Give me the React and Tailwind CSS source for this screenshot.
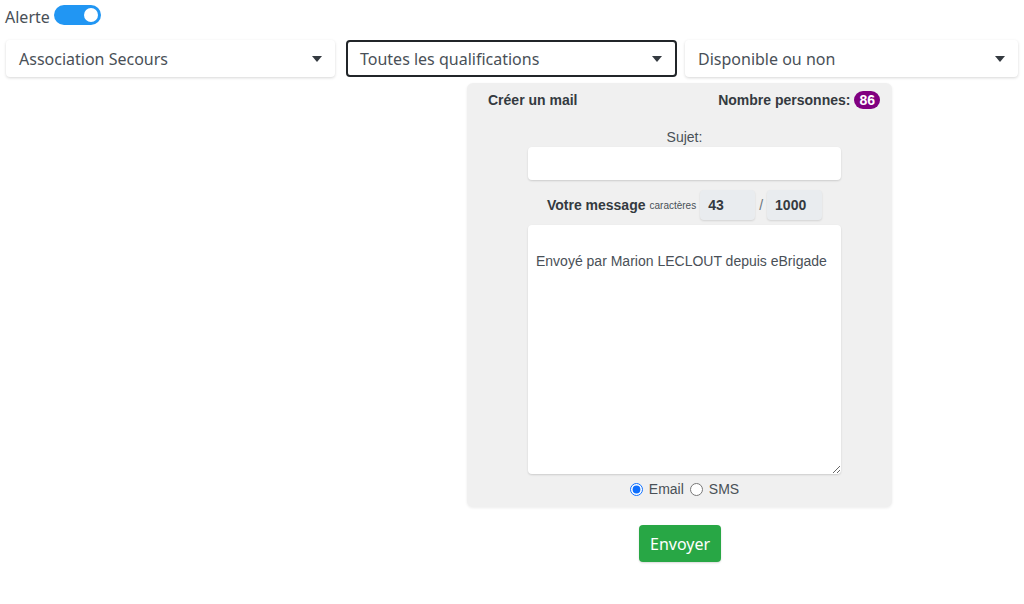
import { useState } from 'react';

const Caret = () => (
  <svg width="10" height="6" viewBox="0 0 10 6" className="flex-shrink-0">
    <path d="M0 0 L10 0 L5 6 Z" fill="#343a40" />
  </svg>
);

const SelectBox = ({ label, active = false, width }) => (
  <div
    className={`${width} h-[37px] flex items-center justify-between pl-[13px] pr-[13px] rounded-[4px] bg-white text-[16px] text-[#495057] ${
      active ? 'border-2 border-[#212529]' : 'shadow-[0_1px_3px_rgba(0,0,0,0.16)]'
    }`}
    style={{ fontFamily: '"Noto Sans", "Open Sans", sans-serif' }}
  >
    <span className={active ? '-ml-[1px]' : ''}>{label}</span>
    <Caret />
  </div>
);

const App = () => {
  const [alerte, setAlerte] = useState(true);
  const [mode, setMode] = useState('email');
  const message = 'Envoyé par Marion LECLOUT depuis eBrigade';

  return (
    <div className="w-[1024px] h-[604px] bg-white overflow-hidden" style={{ fontFamily: '"Liberation Sans", Arial, sans-serif' }}>
      {/* Alerte toggle */}
      <div className="flex items-start pt-[5px] pl-[5px] h-[35px]">
        <span
          className="text-[16px] leading-[22px] text-[#495057] mt-[1px] mr-[4px]"
          style={{ fontFamily: '"Noto Sans", "Open Sans", sans-serif' }}
        >
          Alerte
        </span>
        <button
          onClick={() => setAlerte(!alerte)}
          className={`w-[47px] h-[20px] rounded-full flex items-center px-[3px] ${alerte ? 'bg-[#2196f3] justify-end' : 'bg-gray-300 justify-start'}`}
        >
          <span className="w-[14px] h-[14px] rounded-full bg-white" />
        </button>
      </div>

      {/* Filters */}
      <div className="flex px-[6px] mt-[5px]">
        <SelectBox label="Association Secours" width="w-[329px]" />
        <div className="w-[11px]" />
        <SelectBox label="Toutes les qualifications" active width="w-[331px]" />
        <div className="w-[8px]" />
        <SelectBox label="Disponible ou non" width="w-[333px]" />
      </div>

      {/* Mail card */}
      <div className="ml-[467px] w-[425px] mt-[6px] bg-[#f0f0f0] rounded-[6px] shadow-[0_1px_3px_rgba(0,0,0,0.08)] pt-[9px] pb-[10px]">
        <div className="flex items-center justify-between pl-[21px] pr-[12px] h-[16px] text-[14px] font-bold text-[#343a40]">
          <span>Créer un mail</span>
          <span className="flex items-center gap-[4px]">
            Nombre personnes:
            <span className="bg-[#800080] text-white rounded-full px-[5px] h-[18px] leading-[18px] text-[14px]">86</span>
          </span>
        </div>

        <div className="pl-[10px]">
          <div className="text-center text-[14px] leading-[16px] text-[#495057] mt-[21px]">Sujet:</div>
          <div className="flex justify-center mt-[2px]">
            <input className="w-[313px] h-[33px] bg-white rounded-[4px] shadow-[0_1px_2px_rgba(0,0,0,0.15)] outline-none px-2 text-[14px]" />
          </div>

          <div className="flex items-center justify-center mt-[10px] text-[#343a40]">
            <span className="text-[14px] font-bold">Votre message</span>
            <span className="text-[10px] text-[#495057] ml-[4px]">caractères</span>
            <span className="ml-[4px] w-[55px] h-[30px] bg-[#e9ecef] rounded-[4px] shadow-[0_1px_2px_rgba(0,0,0,0.12)] flex items-center pl-[8px] text-[14px] font-bold">
              {message.length + 2}
            </span>
            <span className="mx-[4px] text-[14px] text-[#6c757d]">/</span>
            <span className="w-[55px] h-[30px] bg-[#e9ecef] rounded-[4px] shadow-[0_1px_2px_rgba(0,0,0,0.12)] flex items-center pl-[8px] text-[14px] font-bold">
              1000
            </span>
          </div>

          <div className="flex justify-center mt-[5px]">
            <textarea
              defaultValue={'\n' + message}
              className="w-[313px] h-[249px] bg-white rounded-[4px] shadow-[0_1px_2px_rgba(0,0,0,0.15)] outline-none pl-[8px] pt-[9px] text-[14px] leading-[18px] text-[#495057] block"
              style={{ fontFamily: '"Liberation Sans", Arial, sans-serif' }}
            />
          </div>

          <div className="flex items-center justify-center mt-[7px] h-[16px] text-[14px] leading-[16px] text-[#495057] gap-[4px]">
            <input type="radio" name="mode" checked={mode === 'email'} onChange={() => setMode('email')} className="w-[13px] h-[13px] accent-[#0d6efd] m-0" />
            <span className="ml-[2px]">Email</span>
            <input type="radio" name="mode" checked={mode === 'sms'} onChange={() => setMode('sms')} className="w-[13px] h-[13px] m-0 ml-[2px]" />
            <span className="ml-[2px]">SMS</span>
          </div>
        </div>
      </div>

      <div className="flex ml-[639px] mt-[18px]">
        <button
          className="h-[37px] px-[11px] bg-[#28a745] text-white text-[16px] rounded-[4px] shadow-[0_1px_2px_rgba(0,0,0,0.15)]"
          style={{ fontFamily: '"Noto Sans", "Open Sans", sans-serif' }}
        >
          Envoyer
        </button>
      </div>
    </div>
  );
};

export default App;
